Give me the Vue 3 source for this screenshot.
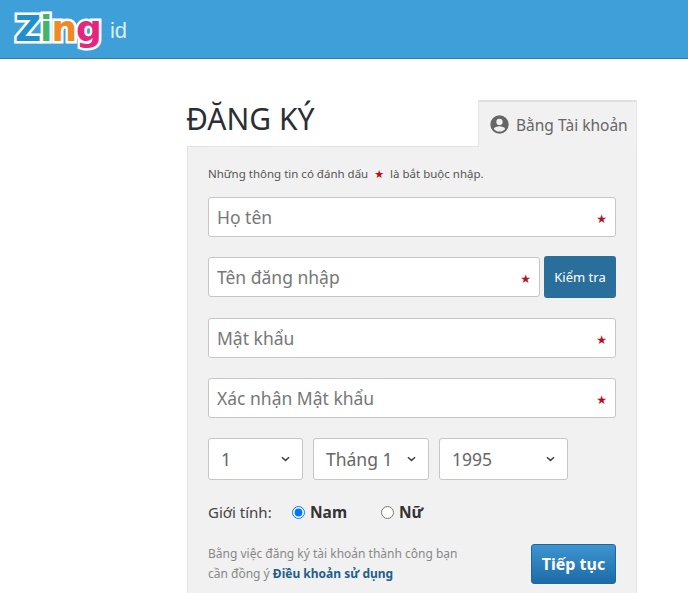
<template>
  <div class="page">
    <header class="topbar">
      <a class="logo" href="#">
        <span class="logo__word">
          <span class="c-blue">Z</span><span class="c-green">i</span><span class="c-orange">n</span><span class="c-pink">g</span>
        </span>
        <span class="logo__id">id</span>
      </a>
    </header>

    <main class="register">
      <div class="register__head">
        <h1 class="register__title">ĐĂNG KÝ</h1>
        <div class="tab">
          <svg class="tab__icon" viewBox="0 0 24 24" width="21" height="21">
            <path fill="#666" fill-rule="evenodd" d="M12 1.5a10.5 10.5 0 1 0 0 21 10.5 10.5 0 0 0 0-21zm0 4a3.6 3.6 0 1 1 0 7.2 3.6 3.6 0 0 1 0-7.2zm0 14.6c-2.7 0-5-1.2-6.4-3.1.1-1.9 4.3-3 6.4-3s6.3 1.1 6.4 3c-1.4 1.9-3.7 3.1-6.4 3.1z" />
          </svg>
          <span>Bằng Tài khoản</span>
        </div>
      </div>

      <form class="panel" @submit.prevent>
        <p class="panel__note">Những thông tin có đánh dấu <span class="star star--note">★</span> là bắt buộc nhập.</p>

        <div class="field-row" v-for="field in fields" :key="field.label">
          <div class="field">
            <span class="field__label">{{ field.label }}</span>
            <span class="star">★</span>
          </div>
          <button v-if="field.check" type="button" class="btn-check">Kiểm tra</button>
        </div>

        <div class="dates">
          <div class="select" v-for="item in dates" :key="item.text" :class="item.cls">
            <span>{{ item.text }}</span>
            <svg viewBox="0 0 10 6" width="9" height="6">
              <path d="M1 1l4 3.6L9 1" fill="none" stroke="#444" stroke-width="1.7" />
            </svg>
          </div>
        </div>

        <div class="gender">
          <span class="gender__label">Giới tính:</span>
          <label class="radio">
            <input type="radio" name="gender" checked />
            <b>Nam</b>
          </label>
          <label class="radio radio--second">
            <input type="radio" name="gender" />
            <b>Nữ</b>
          </label>
        </div>

        <div class="foot">
          <p class="foot__text">
            Bằng việc đăng ký tài khoản thành công bạn<br />
            cần đồng ý <a href="#">Điều khoản sử dụng</a>
          </p>
          <button type="button" class="btn-next">Tiếp tục</button>
        </div>
      </form>
    </main>
  </div>
</template>

<script setup>
const fields = [
  { label: 'Họ tên' },
  { label: 'Tên đăng nhập', check: true },
  { label: 'Mật khẩu' },
  { label: 'Xác nhận Mật khẩu' }
];

const dates = [
  { text: '1', cls: 'select--day' },
  { text: 'Tháng 1', cls: 'select--month' },
  { text: '1995', cls: 'select--year' }
];
</script>

<style>
html,
body {
  margin: 0;
  overflow: hidden;
  background: #fff;
}
</style>

<style scoped>
.page {
  height: 593px;
  overflow: hidden;
  font-family: "Noto Sans", "Open Sans", sans-serif;
  color: #333;
}

.topbar {
  height: 58px;
  background: #3f9fd8;
  border-bottom: 1px solid #3b7aa0;
  display: flex;
  align-items: center;
  padding-left: 15px;
}

.logo {
  display: flex;
  align-items: center;
  gap: 9px;
  text-decoration: none;
}

.logo__word {
  font-family: "DejaVu Sans", sans-serif;
  font-size: 36px;
  font-weight: 700;
  letter-spacing: -1px;
  line-height: 40px;
  -webkit-text-stroke: 5px #fff;
  paint-order: stroke fill;
}

.c-blue { color: #1f8fd0; }
.c-green { color: #3fb66b; }
.c-orange { color: #ef8a24; }
.c-pink { color: #e6257f; }

.logo__id {
  font-family: "Liberation Sans", sans-serif;
  font-size: 22px;
  color: #d6eefa;
  margin-top: 4px;
}

.register {
  width: 450px;
  margin: 40px 0 0 187px;
}

.register__head {
  display: flex;
  justify-content: space-between;
  align-items: flex-end;
  height: 47px;
}

.register__title {
  margin: 0;
  font-size: 30px;
  font-weight: 400;
  color: #2b2f33;
  line-height: 40px;
  padding-bottom: 7px;
  margin-left: -1px;
}

.tab {
  width: 159px;
  height: 47px;
  box-sizing: border-box;
  background: #f1f1f1;
  border-top: 2px solid #e0e0e0;
  border-left: 1px solid #e6e6e6;
  border-right: 1px solid #e6e6e6;
  display: flex;
  align-items: center;
  gap: 6px;
  padding-left: 10px;
  font-size: 15.5px;
  color: #666;
  position: relative;
  z-index: 1;
  margin-bottom: -1px;
}

.panel {
  background: #f1f1f1;
  border: 1px solid #e3e3e3;
  box-sizing: border-box;
  height: 460px;
  padding: 20px 20px 0;
}

.panel__note {
  margin: 0 0 15px;
  font-size: 11.5px;
  line-height: 14px;
  color: #555;
}

.star {
  color: #b3121d;
  font-size: 12px;
  font-family: "DejaVu Sans", sans-serif;
}

.star--note {
  font-size: 11px;
  margin: 0 3px;
}

.field-row {
  display: flex;
  gap: 4px;
  margin-bottom: 20px;
}

.field {
  flex: 1;
  height: 40px;
  box-sizing: border-box;
  background: #fff;
  border: 1px solid #c6c6c6;
  border-radius: 3px;
  display: flex;
  align-items: center;
  justify-content: space-between;
  padding: 0 8px;
  font-size: 17.5px;
  color: #777;
}

.field .star {
  margin-top: 4px;
}

.btn-check {
  width: 72px;
  height: 42px;
  margin-top: -1px;
  border: 0;
  border-radius: 3px;
  background: #2a6f9c;
  color: #fff;
  font-family: inherit;
  font-size: 13px;
  padding: 0;
}

.dates {
  display: flex;
  gap: 10px;
  margin-bottom: 20px;
}

.select {
  height: 42px;
  box-sizing: border-box;
  background: #fff;
  border: 1px solid #c6c6c6;
  border-radius: 3px;
  display: flex;
  align-items: center;
  justify-content: space-between;
  padding: 0 12px;
  font-size: 17.5px;
  color: #666;
}

.select--day { width: 95px; }
.select--month { width: 116px; }
.select--year { width: 129px; }

.gender {
  display: flex;
  align-items: center;
  font-size: 15px;
  color: #444;
  height: 24px;
  margin-bottom: 20px;
}

.gender__label {
  width: 84px;
}

.radio {
  display: flex;
  align-items: center;
  gap: 5px;
  color: #333;
  font-size: 15.5px;
}

.radio input {
  margin: 0;
  width: 13px;
  height: 13px;
}

.radio--second {
  margin-left: 34px;
}

.foot {
  display: flex;
  justify-content: space-between;
  align-items: flex-start;
}

.foot__text {
  margin: 0;
  font-size: 12px;
  line-height: 20px;
  color: #888;
}

.foot__text a {
  color: #1f5f8b;
  font-weight: 700;
  text-decoration: none;
}

.btn-next {
  width: 85px;
  height: 40px;
  border: 1px solid #1f669c;
  border-radius: 3px;
  background: linear-gradient(#3d95d0, #1c6ba8);
  color: #fff;
  font-family: inherit;
  font-size: 16px;
  font-weight: 700;
  padding: 0;
}
</style>
